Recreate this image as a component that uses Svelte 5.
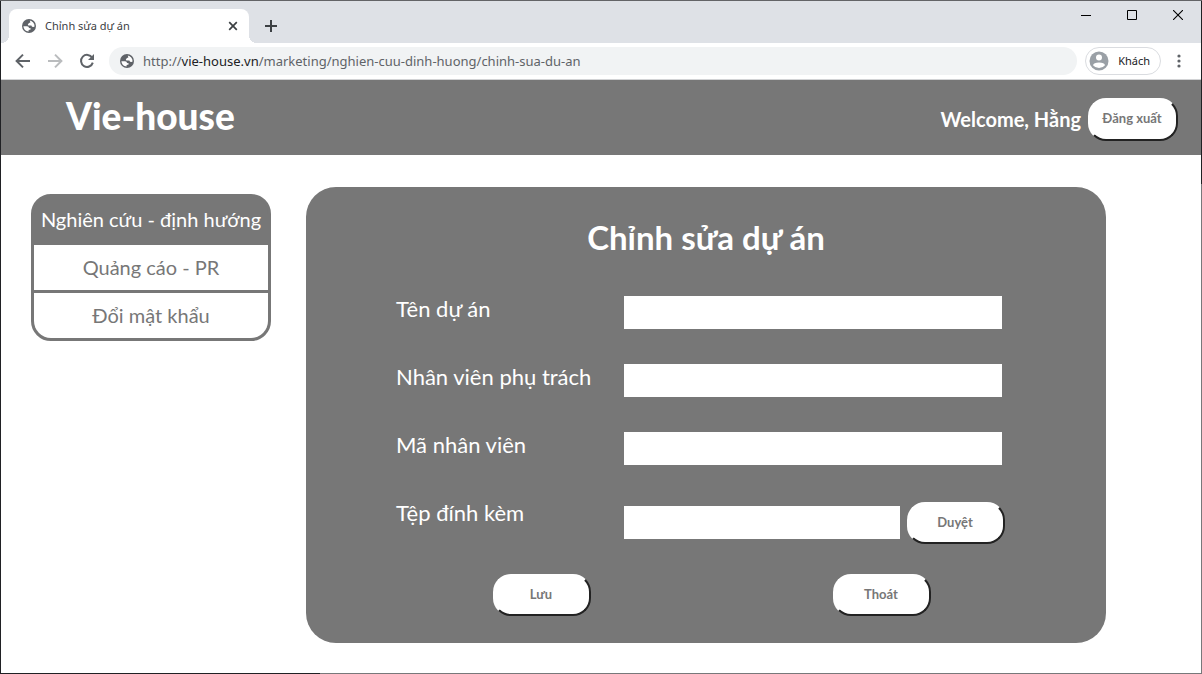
<script>
  let projectName = $state('');
  let staffName = $state('');
  let staffCode = $state('');
  let attachment = $state('');
  let address = $state('http://vie-house.vn/marketing/nghien-cuu-dinh-huong/chinh-sua-du-an');
</script>

{#snippet globe()}
  <svg class="globe" viewBox="0 0 16 16" aria-hidden="true">
    <circle cx="8" cy="8" r="7" fill="#5f6368" />
    <path d="M2.4 8.2 L6 8.2 Q8 8.4 8 10 L9.6 10.2 L9.6 11.4 L7.6 12 L7.6 13.4 Q2.8 13.2 2.4 8.2Z" fill="#fff" />
    <path d="M8.8 2.4 Q10.9 2.8 12.2 4.4 Q13.6 6 13.6 8.6 L12.4 9 L11 8.8 L10.4 7.6 L7.4 7.6 L6.8 6.4 L8 5 L9.4 4.6Z" fill="#fff" />
  </svg>
{/snippet}

<div class="window">
  <div class="browser">
    <div class="tabs">
      <div class="tab">
        {@render globe()}
        <span class="tab-title">Chỉnh sửa dự án</span>
        <button class="icon" aria-label="Đóng thẻ">
          <svg width="10" height="10" viewBox="0 0 10 10"><path d="M1.2 1.2l7.6 7.6M8.8 1.2L1.2 8.8" stroke="#3c4043" stroke-width="1.7" /></svg>
        </button>
      </div>
      <button class="icon new-tab" aria-label="Thẻ mới">
        <svg width="12" height="12" viewBox="0 0 12 12"><path d="M6 0v12M0 6h12" stroke="#3c4043" stroke-width="2" /></svg>
      </button>
      <div class="caption">
        <button class="icon" aria-label="Thu nhỏ">
          <svg width="10" height="10" viewBox="0 0 10 10"><path d="M0 5.5h10" stroke="#000" /></svg>
        </button>
        <button class="icon" aria-label="Phóng to">
          <svg width="10" height="10" viewBox="0 0 10 10"><path d="M.5 .5h9v9h-9z" fill="none" stroke="#000" /></svg>
        </button>
        <button class="icon" aria-label="Đóng">
          <svg width="10" height="10" viewBox="0 0 10 10"><path d="M0 0l10 10M10 0L0 10" stroke="#000" stroke-width="1.1" /></svg>
        </button>
      </div>
    </div>
    <div class="toolbar">
      <button class="icon" aria-label="Quay lại">
        <svg width="16" height="16" viewBox="0 0 16 16"><path d="M15 8H2M8 1.6L1.6 8L8 14.4" fill="none" stroke="#5f6368" stroke-width="2" /></svg>
      </button>
      <button class="icon" aria-label="Tiến">
        <svg width="16" height="16" viewBox="0 0 16 16"><path d="M1 8H14M8 1.6L14.4 8L8 14.4" fill="none" stroke="#babcbe" stroke-width="2" /></svg>
      </button>
      <button class="icon" aria-label="Tải lại">
        <svg width="16" height="16" viewBox="0 0 16 16"><path d="M13.2 4.8A6 6 0 1 0 13.8 9.6" fill="none" stroke="#5f6368" stroke-width="2" /><path d="M15 1v6H9z" fill="#5f6368" /></svg>
      </button>
      <label class="omnibox">
        {@render globe()}
        <span class="url" aria-hidden="true">http://<b>vie-house.vn</b>/marketing/nghien-cuu-dinh-huong/chinh-sua-du-an</span>
        <input class="url-input" type="text" aria-label="Địa chỉ" bind:value={address} />
      </label>
      <button class="profile">
        <svg width="20" height="20" viewBox="0 0 20 20" aria-hidden="true"><circle cx="10" cy="10" r="9.5" fill="#9aa0a6" /><circle cx="10" cy="6.4" r="3" fill="#fff" /><path d="M4 14.2Q4.6 11.4 10 11.4T16 14.2Q13.8 17 10 17T4 14.2Z" fill="#fff" /></svg>
        Khách
      </button>
      <button class="icon menu-dots" aria-label="Trình đơn">
        <svg width="4" height="14" viewBox="0 0 4 14"><g fill="#5f6368"><circle cx="2" cy="2" r="1.6" /><circle cx="2" cy="7" r="1.6" /><circle cx="2" cy="12" r="1.6" /></g></svg>
      </button>
    </div>
  </div>

  <div class="page">
    <header>
      <div class="brand">Vie-house</div>
      <span class="welcome">Welcome, Hằng</span>
      <button class="pill logout">Đăng xuất</button>
    </header>
    <main>
      <nav>
        <a class="active" href="#research">Nghiên cứu - định hướng</a>
        <a href="#ads">Quảng cáo - PR</a>
        <a href="#password">Đổi mật khẩu</a>
      </nav>
      <form onsubmit={(e) => e.preventDefault()}>
        <h1>Chỉnh sửa dự án</h1>
        <div class="field">
          <label for="project">Tên dự án</label>
          <input id="project" type="text" bind:value={projectName} />
        </div>
        <div class="field">
          <label for="staff">Nhân viên phụ trách</label>
          <input id="staff" type="text" bind:value={staffName} />
        </div>
        <div class="field">
          <label for="code">Mã nhân viên</label>
          <input id="code" type="text" bind:value={staffCode} />
        </div>
        <div class="field file">
          <label for="file">Tệp đính kèm</label>
          <input id="file" type="text" bind:value={attachment} />
          <button class="pill" type="button">Duyệt</button>
        </div>
        <div class="actions">
          <button class="pill" type="submit">Lưu</button>
          <button class="pill" type="button">Thoát</button>
        </div>
      </form>
    </main>
  </div>
</div>

<style>
  :global(body) {
    margin: 0;
  }
  .window, .window :global(*) {
    box-sizing: border-box;
  }
  .window {
    min-height: 100vh;
    display: flex;
    flex-direction: column;
    padding: 1px;
    background:
      linear-gradient(#636467, #636467) top / 100% 1px no-repeat,
      linear-gradient(#202124, #202124) left / 1px 100% no-repeat,
      linear-gradient(#202124 184px, #77787a 184px) right / 1px 100% no-repeat,
      linear-gradient(90deg, #202124 320px, #77787a 320px) bottom / 100% 1px no-repeat;
  }
  button {
    font: inherit;
    cursor: pointer;
  }
  .icon {
    display: flex;
    align-items: center;
    justify-content: center;
    padding: 0;
    border: 0;
    background: none;
  }
  svg {
    display: block;
    flex: none;
  }
  .globe {
    width: 16px;
    height: 16px;
  }
  .browser {
    font: 11px/16px "Noto Sans", "Open Sans", sans-serif;
    color: #3c4043;
    background: #fff;
    border-bottom: 1px solid #d2d3d5;
  }
  .tabs {
    display: flex;
    height: 42px;
    padding: 8px 0 0 8px;
    background: #dee1e6;
  }
  .tab {
    position: relative;
    display: flex;
    align-items: center;
    width: 240px;
    padding: 0 11px 0 12px;
    gap: 8px;
    background: #fff;
    border-radius: 8px 8px 0 0;
  }
  .tab::before, .tab::after {
    content: "";
    position: absolute;
    bottom: 0;
    width: 8px;
    height: 8px;
  }
  .tab::before {
    right: 100%;
    background: radial-gradient(circle at 0 0, transparent 8px, #fff 8px);
  }
  .tab::after {
    left: 100%;
    background: radial-gradient(circle at 100% 0, transparent 8px, #fff 8px);
  }
  .tab-title {
    flex: 1;
  }
  .new-tab {
    width: 44px;
  }
  .caption {
    display: flex;
    align-self: flex-start;
    margin-left: auto;
  }
  .caption .icon {
    width: 46px;
    height: 12px;
  }
  .toolbar {
    display: flex;
    align-items: center;
    gap: 16px;
    height: 36px;
    padding: 0 20px 0 14px;
  }
  .omnibox {
    position: relative;
    flex: 1;
    display: flex;
    align-items: center;
    gap: 8px;
    height: 28px;
    margin: 0 -8px 0 -2px;
    padding-left: 10px;
    border-radius: 14px;
    background: #f1f3f4;
    font-size: 13px;
    color: #5f6368;
  }
  .url b {
    font-weight: 400;
    color: #202124;
  }
  .url-input {
    position: absolute;
    inset: 0 14px 0 34px;
    padding: 0;
    border: 0;
    outline: 0;
    background: none;
    font: inherit;
    color: transparent;
  }
  .profile {
    display: flex;
    align-items: center;
    gap: 9px;
    height: 28px;
    padding: 0 10px 0 3px;
    border: 1px solid #dadce0;
    border-radius: 14px;
    background: #fff;
    color: #202124;
  }
  .page {
    flex: 1;
    background: #fff;
    font-family: Lato, Carlito, sans-serif;
    font-size: 20px;
    color: #777;
  }
  header {
    display: flex;
    align-items: center;
    height: 75px;
    padding: 3px 23px 0 65px;
    background: #777;
    color: #fff;
    font-weight: 700;
  }
  .brand {
    flex: 1;
    padding-bottom: 6px;
    font-size: 37px;
    line-height: 44px;
    font-weight: 900;
  }
  .welcome {
    margin-right: 7px;
  }
  .pill {
    width: 98px;
    height: 42px;
    padding: 0 2px 2px 0;
    border: 2px solid;
    border-color: #fff #222 #222 #fff;
    border-radius: 18px;
    background: #fff;
    color: #777;
    font-size: 13px;
    font-weight: 700;
  }
  .logout {
    width: 90px;
    height: 43px;
  }
  main {
    display: grid;
    grid-template-columns: 240px minmax(0, 1fr);
    align-items: start;
    gap: 35px;
    padding: 32px 95px 30px 30px;
  }
  nav {
    margin-top: 7px;
    border: 3px solid #777;
    border-radius: 20px;
    overflow: hidden;
    background: #777;
  }
  nav a {
    display: block;
    line-height: 45px;
    text-align: center;
    white-space: nowrap;
    text-decoration: none;
    color: inherit;
    background: #fff;
  }
  nav a + a {
    border-top: 3px solid #777;
  }
  nav .active {
    background: #777;
    color: #fff;
  }
  form {
    padding: 30px 90px 27px;
    border-radius: 30px;
    background: #777;
    color: #fff;
    font-size: 22px;
  }
  h1 {
    margin: 0 0 39px;
    text-align: center;
    font-size: 33px;
    line-height: 40px;
    font-weight: 700;
  }
  .field {
    display: flex;
    align-items: flex-start;
    margin-bottom: 35px;
    padding-right: 14px;
  }
  .field label {
    flex: 0 0 228px;
    line-height: 26px;
  }
  .field input {
    flex: 1;
    min-width: 0;
    height: 33px;
    padding: 0 8px;
    border: 0;
    border-radius: 0;
    background: #fff;
    font: inherit;
    color: #333;
  }
  .file {
    margin-bottom: 30px;
    padding-right: 11px;
  }
  .file input {
    margin: 6px 7px 0 0;
  }
  .file .pill {
    margin-top: 2px;
  }
  .actions {
    display: flex;
    justify-content: space-between;
    padding: 0 85px 0 97px;
  }
</style>
